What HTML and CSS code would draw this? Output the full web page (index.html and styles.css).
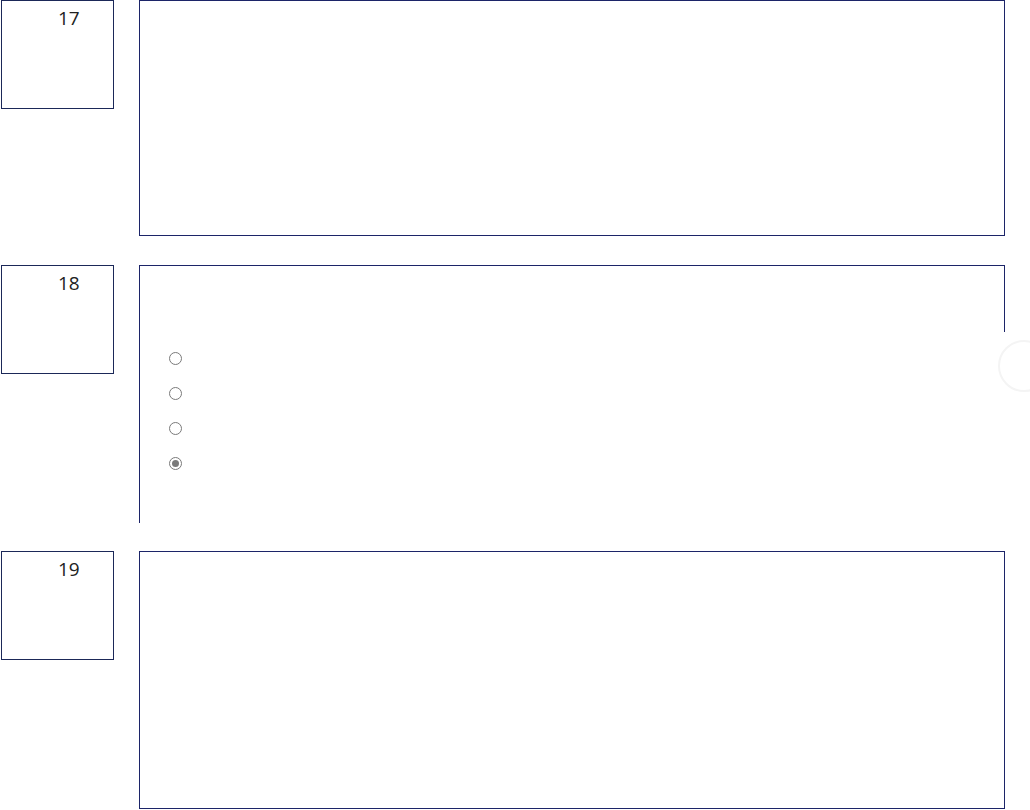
FILE: index.html
```html
<!DOCTYPE html>
<html lang="en">
<head>
  <meta charset="UTF-8" />
  <title>Questions</title>
  <link rel="stylesheet" href="styles.css">
</head>
<body>
  <div class="questions">
    <div class="question">
      <div class="number">17</div>
      <div class="panel"></div>
    </div>

    <div class="question">
      <div class="number">18</div>
      <div class="panel open">
        <div class="options">
          <label class="option"><input type="radio" name="q18" /></label>
          <label class="option"><input type="radio" name="q18" /></label>
          <label class="option"><input type="radio" name="q18" /></label>
          <label class="option"><input type="radio" name="q18" checked /></label>
        </div>
      </div>
    </div>

    <div class="question last">
      <div class="number">19</div>
      <div class="panel"></div>
    </div>
  </div>

  <div class="scroll-hint"></div>
</body>
</html>
```

FILE: styles.css
```css
* {
  box-sizing: border-box;
}

html, body {
  margin: 0;
  padding: 0;
  background: #fff;
  font-family: 'Open Sans', 'Noto Sans', sans-serif;
  color: #222;
  overflow: hidden;
}

.questions {
  display: flex;
  flex-direction: column;
  gap: 29px;
  padding-left: 1px;
}

.question {
  display: flex;
  align-items: flex-start;
  gap: 25px;
}

.number {
  width: 113px;
  height: 109px;
  flex-shrink: 0;
  border: 1px solid #1b2858;
  padding: 4px 0 0 56px;
  font-size: 19px;
  line-height: 26px;
}

.panel {
  width: 866px;
  height: 236px;
  border: 1px solid #1c2468;
}

.panel.open {
  position: relative;
  height: 258px;
  border-right: none;
  border-bottom: none;
  padding: 86px 0 0 29px;
}

.panel.open::after {
  content: "";
  position: absolute;
  top: -1px;
  right: 0;
  width: 1px;
  height: 67px;
  background: #1c2468;
}

.question.last {
  margin-top: -1px;
}

.question.last .panel {
  height: 258px;
}

.options {
  display: flex;
  flex-direction: column;
  gap: 22px;
}

.option {
  display: flex;
  align-items: center;
  height: 13px;
}

.option input {
  appearance: none;
  margin: 0;
  width: 13px;
  height: 13px;
  border: 1px solid #7a7a7a;
  border-radius: 50%;
  background: #fff;
  display: grid;
  place-items: center;
}

.option input:checked::before {
  content: "";
  width: 7px;
  height: 7px;
  border-radius: 50%;
  background: #7a7a7a;
}

.scroll-hint {
  position: absolute;
  top: 340px;
  left: 998px;
  width: 52px;
  height: 52px;
  border: 2px solid #f4f4f4;
  border-radius: 50%;
}
```
